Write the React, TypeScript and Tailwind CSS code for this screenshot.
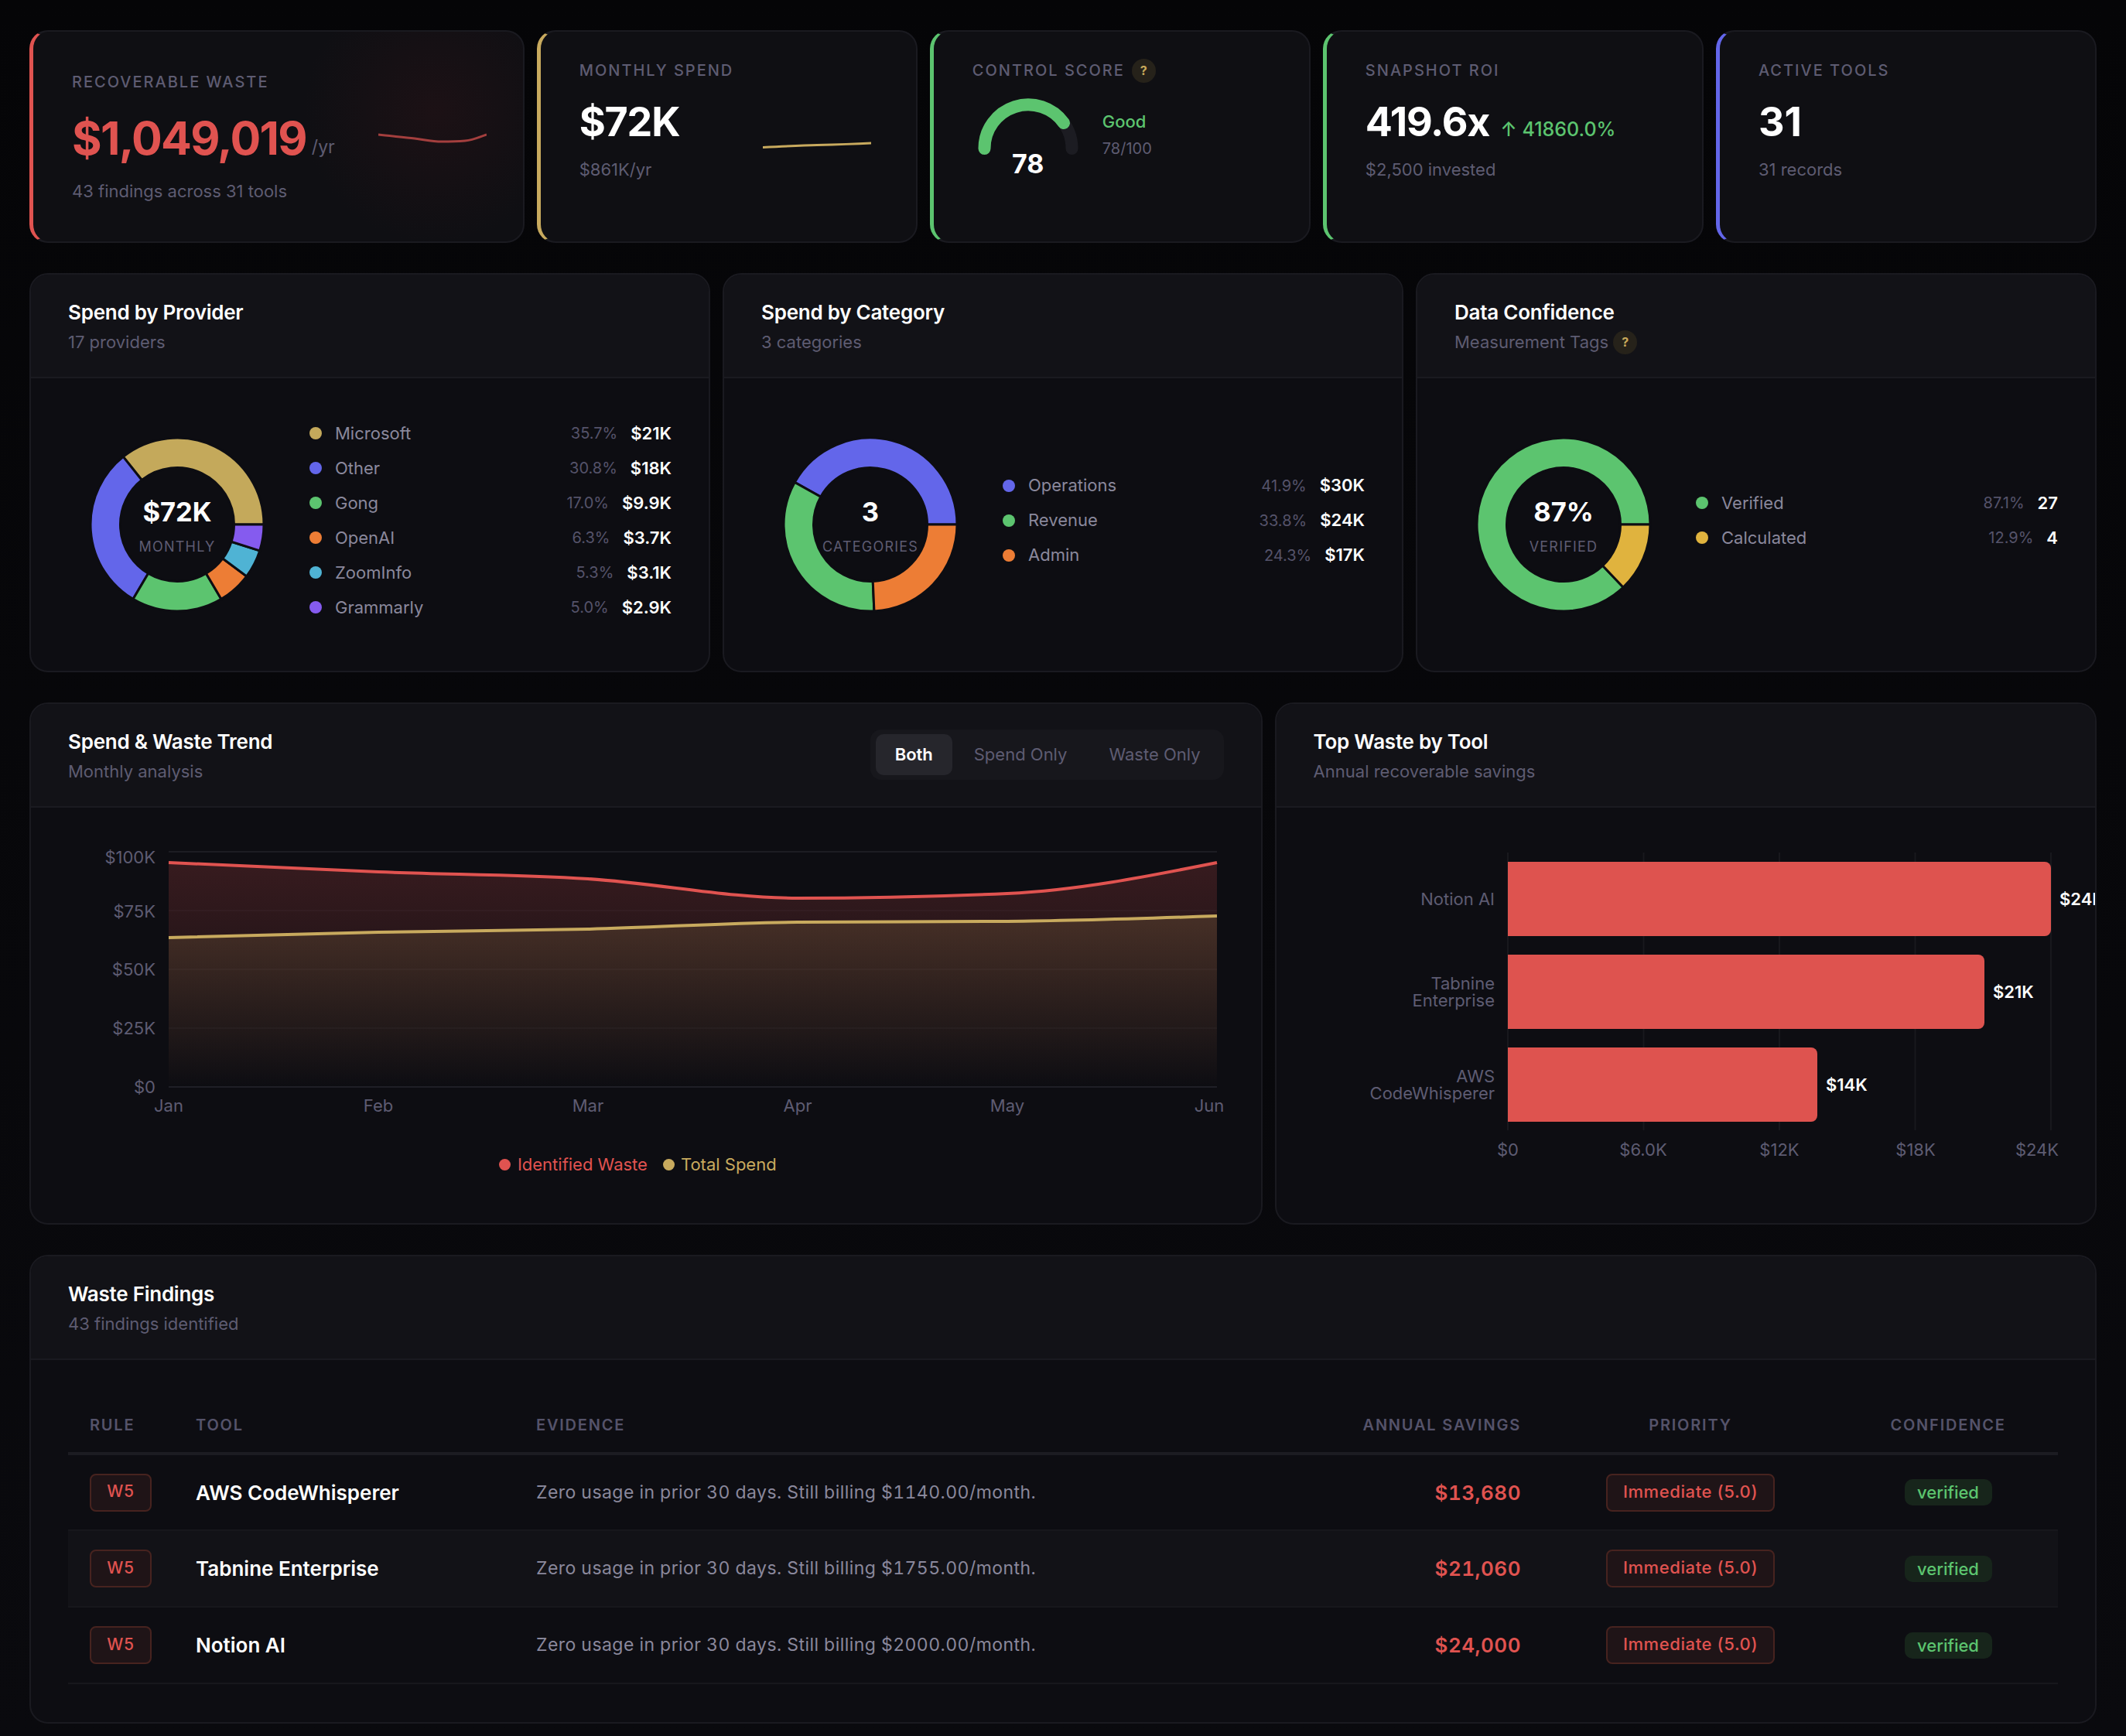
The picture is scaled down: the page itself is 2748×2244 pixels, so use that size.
import type { ReactNode } from 'react';

const RED = '#e05350';
const GOLD = '#c8aa5e';
const INDIGO = '#6366ea';
const GREEN = '#5cc46f';
const ORANGE = '#ed7d35';
const CYAN = '#4fb3d4';
const PURPLE = '#855bef';
const AMBER = '#e0b33e';
const AXIS = '#5e5c72';

type Pt = [number, number];

// d3 curveMonotoneX, same as the chart lib draws
function monotone(pts: Pt[]) {
    const n = pts.length;
    const sec = pts.slice(1).map((p, i) => (p[1] - pts[i][1]) / (p[0] - pts[i][0]));
    const m: number[] = new Array(n).fill(0);
    for (let i = 1; i < n - 1; i++) {
        const h0 = pts[i][0] - pts[i - 1][0];
        const h1 = pts[i + 1][0] - pts[i][0];
        const s0 = sec[i - 1];
        const s1 = sec[i];
        const p = (s0 * h1 + s1 * h0) / (h0 + h1);
        m[i] = (Math.sign(s0) + Math.sign(s1)) * Math.min(Math.abs(s0), Math.abs(s1), 0.5 * Math.abs(p));
    }
    m[0] = (3 * sec[0] - m[1]) / 2;
    m[n - 1] = (3 * sec[n - 2] - m[n - 2]) / 2;
    let d = `M${pts[0][0]},${pts[0][1]}`;
    for (let i = 0; i < n - 1; i++) {
        const h = (pts[i + 1][0] - pts[i][0]) / 3;
        d += `C${pts[i][0] + h},${pts[i][1] + m[i] * h} ${pts[i + 1][0] - h},${pts[i + 1][1] - m[i + 1] * h} ${pts[i + 1][0]},${pts[i + 1][1]}`;
    }
    return d;
}

function sector(cx: number, cy: number, r0: number, r1: number, a0: number, a1: number) {
    const pt = (r: number, a: number) => {
        const t = (a * Math.PI) / 180;
        return `${cx + r * Math.cos(t)},${cy - r * Math.sin(t)}`;
    };
    const large = a1 - a0 > 180 ? 1 : 0;
    return `M${pt(r1, a0)}A${r1},${r1} 0 ${large} 0 ${pt(r1, a1)}L${pt(r0, a1)}A${r0},${r0} 0 ${large} 1 ${pt(r0, a0)}Z`;
}

// ── Shared bits ─────────────────────────────────────────────────────────────

function HelpDot() {
    return (
        <span className="flex h-[31px] w-[31px] items-center justify-center rounded-full bg-[#26221a] text-[16px] font-bold text-[#c8a95a]">?</span>
    );
}

function StatCard({ accent, className, children }: { accent: string; className: string; children: ReactNode }) {
    return (
        <div className={`h-[275px] overflow-hidden rounded-[24px] border-2 border-l-[5px] border-y-[#1a1a20] border-r-[#1a1a20] bg-[#0f0f13] ${accent} ${className}`}>
            {children}
        </div>
    );
}

function Label({ children }: { children: ReactNode }) {
    return <div className="text-[20px] leading-[24px] font-medium tracking-[2px] text-[#5e5c72] uppercase">{children}</div>;
}

function Panel({ title, subtitle, action, children }: { title: string; subtitle: ReactNode; action?: ReactNode; children: ReactNode }) {
    return (
        <div className="flex h-full flex-col overflow-hidden rounded-[24px] border-2 border-[#1a1a20] bg-[#0d0d12]">
            <div className="flex h-[134px] shrink-0 items-start justify-between border-b-2 border-[#1a1a20] bg-[#121217] pr-[48px] pl-[48px]">
                <div className="pt-[32px]">
                    <div className="text-[26px] leading-[34px] font-semibold tracking-[-0.25px] text-white">{title}</div>
                    <div className="mt-[7px] flex h-[28px] items-center gap-[6px] text-[22px] text-[#5e5c72]">{subtitle}</div>
                </div>
                {action}
            </div>
            {children}
        </div>
    );
}

type Slice = { name: string; pct: string; value: string; share: number; color: string };

function DonutPanel({ title, subtitle, center, caption, slices }: { title: string; subtitle: ReactNode; center: string; caption: string; slices: Slice[] }) {
    let angle = 0;
    return (
        <Panel title={title} subtitle={subtitle}>
            <div className="flex flex-1 items-center pr-[48px] pl-[49px]">
                <div className="relative h-[280px] w-[280px] shrink-0">
                    <svg width="280" height="280" viewBox="0 0 280 280">
                        {slices.map((s) => {
                            const a0 = angle;
                            angle += s.share * 3.6;
                            return <path key={s.name} d={sector(140, 140, 73.5, 112, a0, angle)} fill={s.color} stroke="#0d0d12" strokeWidth="3" />;
                        })}
                    </svg>
                    <div className="absolute inset-0 flex flex-col items-center pt-[101px]">
                        <div className="text-[34.5px] leading-[46px] font-bold text-white">{center}</div>
                        <div className="mt-[10px] text-[18px] leading-[24px] tracking-[1.2px] text-[#5e5c72]">{caption}</div>
                    </div>
                </div>
                <div className="ml-[31px] flex-1 pb-[11px]">
                    {slices.map((s) => (
                        <div key={s.name} className="flex h-[45px] items-center">
                            <span className="h-[16px] w-[16px] rounded-full" style={{ backgroundColor: s.color }} />
                            <span className="ml-[17px] flex-1 text-[22px] text-[#8a889c]">{s.name}</span>
                            <span className="text-[20px] text-[#55536a]">{s.pct}</span>
                            <span className="ml-[17px] text-[22px] font-semibold text-white">{s.value}</span>
                        </div>
                    ))}
                </div>
            </div>
        </Panel>
    );
}

// ── Charts ──────────────────────────────────────────────────────────────────

const xs = [218, 489, 760, 1031, 1302, 1573];
const wasteLine: Pt[] = [1116, 1128, 1137, 1162, 1156, 1116].map((y, i) => [xs[i], y]);
const spendLine: Pt[] = [1213, 1206, 1202, 1193, 1192, 1185].map((y, i) => [xs[i], y]);

function TrendChart() {
    const months = ['Jan', 'Feb', 'Mar', 'Apr', 'May', 'Jun'];
    const ticks: [string, number][] = [['$100K', 1110], ['$75K', 1180], ['$50K', 1255], ['$25K', 1331], ['$0', 1407]];
    return (
        <svg width="1494" height="356" viewBox="89 1090 1494 356" className="block">
            <defs>
                <linearGradient id="wasteFill" x1="0" y1="0" x2="0" y2="1">
                    <stop offset="0%" stopColor={RED} stopOpacity="0.2" />
                    <stop offset="100%" stopColor={RED} stopOpacity="0" />
                </linearGradient>
                <linearGradient id="spendFill" x1="0" y1="0" x2="0" y2="1">
                    <stop offset="0%" stopColor={GOLD} stopOpacity="0.16" />
                    <stop offset="100%" stopColor={GOLD} stopOpacity="0" />
                </linearGradient>
            </defs>
            <line x1="218" x2="1573" y1="1102" y2="1102" stroke="#1c1c22" strokeWidth="2" />
            <line x1="218" x2="1573" y1="1178" y2="1178" stroke="#1a1a20" strokeWidth="1" />
            <line x1="218" x2="1573" y1="1254" y2="1254" stroke="#1a1a20" strokeWidth="1" />
            <line x1="218" x2="1573" y1="1330" y2="1330" stroke="#1a1a20" strokeWidth="1" />
            <line x1="218" x2="1573" y1="1406" y2="1406" stroke="#1f1f26" strokeWidth="2" />
            <path d={`${monotone(wasteLine)}L1573,1406L218,1406Z`} fill="url(#wasteFill)" />
            <path d={`${monotone(spendLine)}L1573,1406L218,1406Z`} fill="url(#spendFill)" />
            <path d={monotone(wasteLine)} fill="none" stroke={RED} strokeWidth="4" />
            <path d={monotone(spendLine)} fill="none" stroke={GOLD} strokeWidth="4" />
            {ticks.map(([t, y]) => (
                <text key={t} x="201" y={y} dy="7" textAnchor="end" fill={AXIS} fontSize="22">{t}</text>
            ))}
            {months.map((m, i) => (
                <text key={m} x={i === 5 ? 1563 : xs[i]} y="1431" dy="7" textAnchor="middle" fill={AXIS} fontSize="22">{m}</text>
            ))}
        </svg>
    );
}

function WasteBars() {
    const grid = [1948, 2123.5, 2299, 2474.5, 2650];
    const axis: [string, number][] = [['$0', 1948], ['$6.0K', 2123], ['$12K', 2299], ['$18K', 2475], ['$24K', 2632]];
    const bars = [
        { y: 1115, end: 2650, value: '$24K', lines: ['Notion AI'] },
        { y: 1235, end: 2564, value: '$21K', lines: ['Tabnine', 'Enterprise'] },
        { y: 1355, end: 2348, value: '$14K', lines: ['AWS', 'CodeWhisperer'] },
    ];
    return (
        <svg width="1010" height="420" viewBox="1697 1090 1010 420" className="block">
            {grid.map((x) => (
                <line key={x} x1={x} x2={x} y1="1103" y2="1462" stroke="#18181d" strokeWidth="2" />
            ))}
            {bars.map((b) => (
                <g key={b.value}>
                    <path
                        d={`M1948,${b.y}H${b.end - 8}a8,8 0 0 1 8,8V${b.y + 88}a8,8 0 0 1 -8,8H1948Z`}
                        fill="#de534f"
                    />
                    <text x={b.end + 11} y={b.y + 48} dy="8" fill="#fff" fontSize="22" fontWeight="600">{b.value}</text>
                    {b.lines.map((l, i) => (
                        <text key={l} x="1931" y={b.y + 49 + (i - (b.lines.length - 1) / 2) * 22} dy="7" textAnchor="end" fill={AXIS} fontSize="22">{l}</text>
                    ))}
                </g>
            ))}
            {axis.map(([t, x]) => (
                <text key={t} x={x} y="1488" dy="7" textAnchor="middle" fill={AXIS} fontSize="22">{t}</text>
            ))}
        </svg>
    );
}

// ── Data ────────────────────────────────────────────────────────────────────

const providers: Slice[] = [
    { name: 'Microsoft', pct: '35.7%', value: '$21K', share: 35.7, color: '#c4a95b' },
    { name: 'Other', pct: '30.8%', value: '$18K', share: 30.8, color: INDIGO },
    { name: 'Gong', pct: '17.0%', value: '$9.9K', share: 17.0, color: GREEN },
    { name: 'OpenAI', pct: '6.3%', value: '$3.7K', share: 6.3, color: ORANGE },
    { name: 'ZoomInfo', pct: '5.3%', value: '$3.1K', share: 5.3, color: CYAN },
    { name: 'Grammarly', pct: '5.0%', value: '$2.9K', share: 4.9, color: PURPLE },
];

const categories: Slice[] = [
    { name: 'Operations', pct: '41.9%', value: '$30K', share: 41.9, color: INDIGO },
    { name: 'Revenue', pct: '33.8%', value: '$24K', share: 33.8, color: GREEN },
    { name: 'Admin', pct: '24.3%', value: '$17K', share: 24.3, color: ORANGE },
];

const confidence: Slice[] = [
    { name: 'Verified', pct: '87.1%', value: '27', share: 87.1, color: GREEN },
    { name: 'Calculated', pct: '12.9%', value: '4', share: 12.9, color: AMBER },
];

const findings = [
    { tool: 'AWS CodeWhisperer', evidence: 'Zero usage in prior 30 days. Still billing $1140.00/month.', savings: '$13,680' },
    { tool: 'Tabnine Enterprise', evidence: 'Zero usage in prior 30 days. Still billing $1755.00/month.', savings: '$21,060' },
    { tool: 'Notion AI', evidence: 'Zero usage in prior 30 days. Still billing $2000.00/month.', savings: '$24,000' },
];

// ── Main Component ──────────────────────────────────────────────────────────

export default function App() {
    return (
        <div className="min-h-screen bg-[linear-gradient(180deg,#050507,#0a0a0e)] px-[38px] pt-[39px] font-[Inter,sans-serif]">
            {/* ── Stat Cards ────────────────────────────────────────────────── */}
            <div className="grid grid-cols-[1.3fr_1fr_1fr_1fr_1fr] gap-[16px]">
                <StatCard accent="border-l-[#e05350]" className="bg-[radial-gradient(circle_at_82%_38%,#1c1115,#0f0f13_170px)] pt-[53px] pr-[47px] pl-[50px]">
                    <Label>Recoverable Waste</Label>
                    <div className="mt-[28px] flex h-[66px] items-center">
                        <span className="text-[59px] leading-[66px] font-bold tracking-[-1.7px] text-[#e05350]">$1,049,019</span>
                        <span className="mt-[22px] ml-[7px] text-[23px] text-[#5e5c72]">/yr</span>
                        <svg width="140" height="16" viewBox="0 0 140 16" className="ml-auto opacity-70">
                            <path d="M0,3 C16,5 32,6 47,8 S70,12 82,12 S100,12 112,11 S128,7 140,3" fill="none" stroke={RED} strokeWidth="3" />
                        </svg>
                    </div>
                    <div className="mt-[21px] text-[22px] leading-[28px] text-[#5e5c72]">43 findings across 31 tools</div>
                </StatCard>

                <StatCard accent="border-l-[#c8aa5e]" className="flex items-center justify-between pr-[58px] pl-[50px]">
                    <div className="self-start pt-[38px]">
                        <Label>Monthly Spend</Label>
                        <div className="mt-[25px] text-[52px] leading-[60px] font-bold tracking-[-1.2px] text-white">$72K</div>
                        <div className="mt-[17px] text-[22px] leading-[28px] text-[#5e5c72]">$861K/yr</div>
                    </div>
                    <svg width="140" height="10" viewBox="0 0 140 10" className="mt-[23px]">
                        <path d="M0,7.5 C30,6 50,5 70,4.5 S110,3.5 140,2" fill="none" stroke={GOLD} strokeWidth="3" />
                    </svg>
                </StatCard>

                <StatCard accent="border-l-[#5cc46f]" className="pt-[38px] pl-[50px]">
                    <div className="flex h-[24px] items-center gap-[9px]">
                        <Label>Control Score</Label>
                        <HelpDot />
                    </div>
                    <div className="mt-[19px] flex">
                        <div className="flex w-[144px] flex-col items-center">
                            <svg width="144" height="80" viewBox="0 0 144 80">
                                <path d="M15.5,70 A56.5,56.5 0 0 1 128.5,70" fill="none" stroke="#1c1c22" strokeWidth="16" strokeLinecap="round" />
                                <path d="M15.5,70 A56.5,56.5 0 0 1 118,37" fill="none" stroke={GREEN} strokeWidth="16" strokeLinecap="round" />
                            </svg>
                            <div className="-mt-[8px] text-[34px] leading-[36px] font-bold text-white">78</div>
                        </div>
                        <div className="ml-[24px] pt-[21px]">
                            <div className="text-[22px] leading-[28px] font-medium text-[#5cc46f]">Good</div>
                            <div className="mt-[8px] text-[20px] leading-[26px] text-[#5e5c72]">78/100</div>
                        </div>
                    </div>
                </StatCard>

                <StatCard accent="border-l-[#5cc46f]" className="pt-[38px] pl-[50px]">
                    <Label>Snapshot ROI</Label>
                    <div className="mt-[25px] flex h-[60px] items-center">
                        <span className="text-[52px] leading-[60px] font-bold tracking-[-1.2px] text-white">419.6x</span>
                        <span className="mt-[20px] ml-[14px] text-[25px] font-medium text-[#5cc46f]">↑ 41860.0%</span>
                    </div>
                    <div className="mt-[17px] text-[22px] leading-[28px] text-[#5e5c72]">$2,500 invested</div>
                </StatCard>

                <StatCard accent="border-l-[#6366ea]" className="pt-[38px] pl-[50px]">
                    <Label>Active Tools</Label>
                    <div className="mt-[25px] text-[52px] leading-[60px] font-bold text-white">31</div>
                    <div className="mt-[17px] text-[22px] leading-[28px] text-[#5e5c72]">31 records</div>
                </StatCard>
            </div>

            {/* ── Donuts ────────────────────────────────────────────────────── */}
            <div className="mt-[39px] grid h-[516px] grid-cols-3 gap-[16px]">
                <DonutPanel title="Spend by Provider" subtitle="17 providers" center="$72K" caption="MONTHLY" slices={providers} />
                <DonutPanel title="Spend by Category" subtitle="3 categories" center="3" caption="CATEGORIES" slices={categories} />
                <DonutPanel
                    title="Data Confidence"
                    subtitle={<>Measurement Tags <HelpDot /></>}
                    center="87%"
                    caption="VERIFIED"
                    slices={confidence}
                />
            </div>

            {/* ── Trend + Top Waste ─────────────────────────────────────────── */}
            <div className="mt-[39px] grid h-[675px] grid-cols-[1.5fr_1fr] gap-[16px]">
                <Panel
                    title="Spend & Waste Trend"
                    subtitle="Monthly analysis"
                    action={
                        <div className="mt-[33px] flex h-[65px] items-center rounded-[14px] bg-[#17171c] px-[7px] text-[22px] text-[#5e5c72]">
                            <span className="flex h-[53px] w-[99px] items-center justify-center rounded-[10px] bg-[#26262c] font-semibold text-white">Both</span>
                            <span className="ml-[28px]">Spend Only</span>
                            <span className="ml-[54px] mr-[23px]">Waste Only</span>
                        </div>
                    }
                >
                    <div className="pt-[45px] pl-[49px]">
                        <TrendChart />
                    </div>
                    <div className="mt-[46px] ml-[-3px] flex justify-center pr-[18px] text-[22px] leading-[28px]">
                        <span className="flex items-center gap-[9px] text-[#e05350]">
                            <span className="h-[15px] w-[15px] rounded-full bg-[#e05350]" />
                            Identified Waste
                        </span>
                        <span className="ml-[20px] flex items-center gap-[8px] text-[#c8aa5e]">
                            <span className="h-[15px] w-[15px] rounded-full bg-[#c8aa5e]" />
                            Total Spend
                        </span>
                    </div>
                </Panel>
                <Panel title="Top Waste by Tool" subtitle="Annual recoverable savings">
                    <div className="pt-[45px] pl-[48px]">
                        <WasteBars />
                    </div>
                </Panel>
            </div>

            {/* ── Findings Table ────────────────────────────────────────────── */}
            <div className="mt-[39px] h-[606px]">
                <Panel title="Waste Findings" subtitle="43 findings identified">
                    <div className="px-[48px] pt-[49px]">
                        <table className="w-full table-fixed border-collapse">
                            <colgroup>
                                <col className="w-[137px]" />
                                <col className="w-[440px]" />
                                <col />
                                <col className="w-[300px]" />
                                <col className="w-[382px]" />
                                <col className="w-[284px]" />
                            </colgroup>
                            <thead>
                                <tr className="h-[72px] border-b-4 border-[#1c1c22] text-[20px] font-semibold tracking-[1.8px] text-[#55536a]">
                                    <th className="px-[28px] text-left font-semibold">RULE</th>
                                    <th className="px-[28px] text-left font-semibold">TOOL</th>
                                    <th className="px-[28px] text-left font-semibold">EVIDENCE</th>
                                    <th className="px-[28px] text-right font-semibold">ANNUAL SAVINGS</th>
                                    <th className="px-[28px] text-center font-semibold">PRIORITY</th>
                                    <th className="px-[28px] text-center font-semibold">CONFIDENCE</th>
                                </tr>
                            </thead>
                            <tbody>
                                {findings.map((f, i) => (
                                    <tr key={f.tool} className={`h-[99px] border-b-2 border-[#17171c] ${i === 1 ? 'bg-[#121217]' : ''}`}>
                                        <td className="px-[28px]">
                                            <span className="inline-flex h-[49px] w-[80px] items-center justify-center rounded-[8px] border-2 border-[#47231f] bg-[#1f1417] pb-[2px] text-[21px] font-medium tracking-[0.8px] text-[#e05350]">W5</span>
                                        </td>
                                        <td className="px-[28px] text-[26px] font-semibold text-white">{f.tool}</td>
                                        <td className="px-[28px] text-[23px] tracking-[0.45px] text-[#8a889c] tabular-nums">{f.evidence}</td>
                                        <td className="px-[28px] text-right text-[26px] font-semibold tracking-[0.5px] text-[#e05350] tabular-nums">{f.savings}</td>
                                        <td className="px-[28px] text-center">
                                            <span className="inline-flex h-[49px] w-[218px] items-center justify-center rounded-[8px] border-2 border-[#47231f] bg-[#1f1417] pb-[2px] text-[22px] font-medium tracking-[0.6px] text-[#e05350]">Immediate (5.0)</span>
                                        </td>
                                        <td className="px-[28px] text-center">
                                            <span className="inline-flex h-[34px] w-[113px] items-center justify-center rounded-[10px] bg-[#17251b] pt-[1px] text-[22px] font-medium text-[#5cc46f]">verified</span>
                                        </td>
                                    </tr>
                                ))}
                            </tbody>
                        </table>
                    </div>
                </Panel>
            </div>
        </div>
    );
}
